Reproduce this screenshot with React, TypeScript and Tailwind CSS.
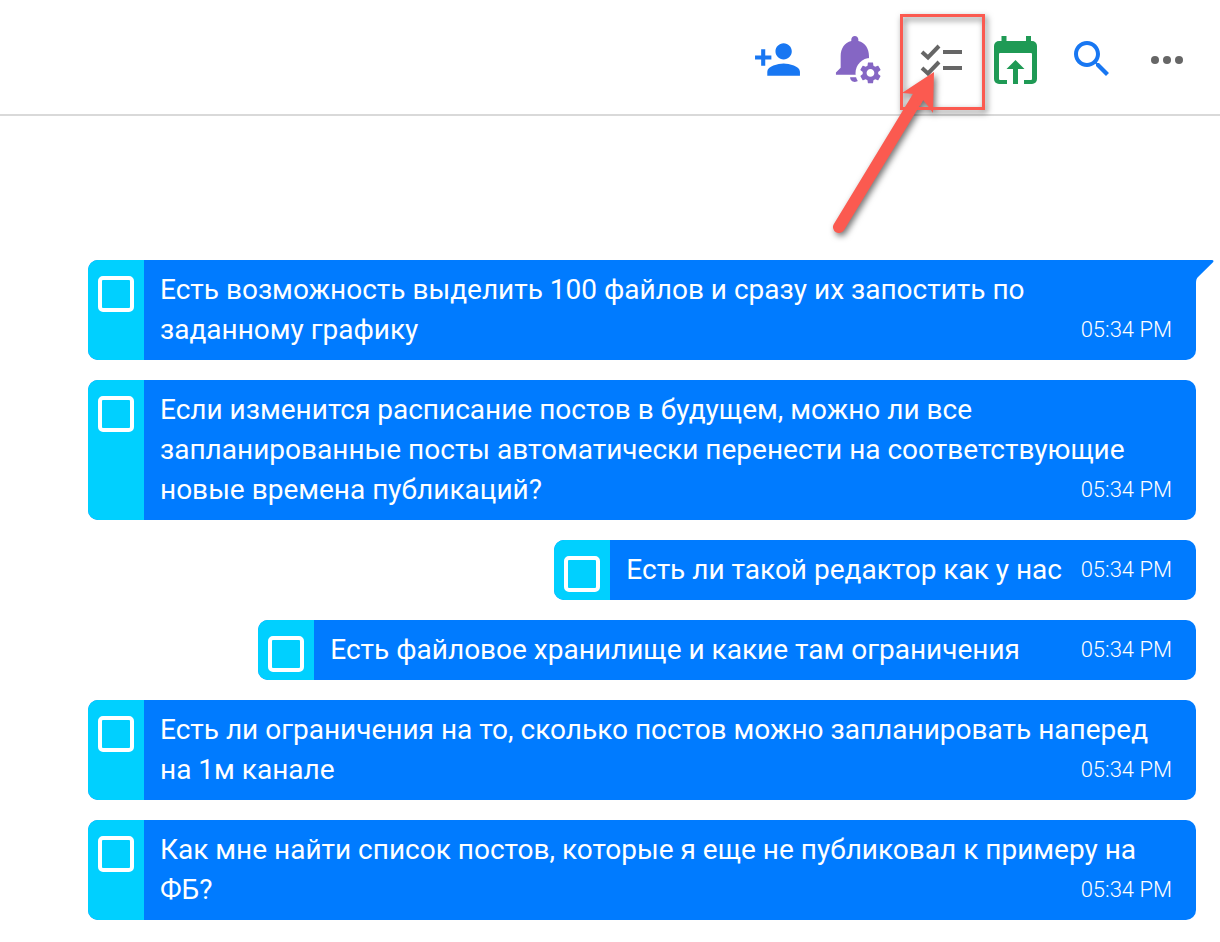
const MESSAGES = [
  { id: 1, text: 'Есть возможность выделить 100 файлов и сразу их запостить по заданному графику', tail: true, spacer: 'w-[100px]' },
  {
    id: 2,
    text: 'Если изменится расписание постов в будущем, можно ли все запланированные посты автоматически перенести на соответствующие новые времена публикаций?',
    spacer: 'w-[100px]',
  },
  { id: 3, text: 'Есть ли такой редактор как у нас', spacer: 'w-[99px]' },
  { id: 4, text: 'Есть файловое хранилище и какие там ограничения', spacer: 'w-[141px]' },
  { id: 5, text: 'Есть ли ограничения на то, сколько постов можно запланировать наперед на 1м канале', spacer: 'w-[100px]' },
  { id: 6, text: 'Как мне найти список постов, которые я еще не публиковал к примеру на ФБ?', spacer: 'w-[100px]' },
];

// --- Header icons ---
const AddPersonIcon = () => (
  <svg width="49" height="49" viewBox="0 0 24 24" fill="#1877f2" className="shrink-0">
    <path d="M15 12c2.21 0 4-1.79 4-4s-1.79-4-4-4-4 1.79-4 4 1.79 4 4 4zm-9-2V7H4v3H1v2h3v3h2v-3h3v-2H6zm9 4c-2.67 0-8 1.34-8 4v2h16v-2c0-2.66-5.33-4-8-4z" />
  </svg>
);

const BellGearIcon = () => (
  <svg width="57" height="57" viewBox="0 0 57 57" className="shrink-0">
    <g transform="translate(0.5 0) scale(2.36)" fill="#8566c4">
      <path d="M12 22c1.1 0 2-.9 2-2h-4c0 1.1.89 2 2 2zm6-6v-5c0-3.07-1.64-5.64-4.5-6.32V4c0-.83-.67-1.5-1.5-1.5s-1.5.67-1.5 1.5v.68C7.63 5.36 6 7.92 6 11v5l-2 2v1h16v-1l-2-2z" />
    </g>
    <circle cx="44.5" cy="43" r="15" fill="#fff" />
    <g transform="translate(31.5 30) scale(1.08)" fill="#8566c4">
      <path d="M19.14 12.94c.04-.3.06-.61.06-.94 0-.32-.02-.64-.07-.94l2.03-1.58c.18-.14.23-.41.12-.61l-1.92-3.32c-.12-.22-.37-.29-.59-.22l-2.39.96c-.5-.38-1.03-.7-1.62-.94l-.36-2.54c-.04-.24-.24-.41-.48-.41h-3.84c-.24 0-.43.17-.47.41l-.36 2.54c-.59.24-1.13.57-1.62.94l-2.39-.96c-.22-.08-.47 0-.59.22L2.74 8.87c-.12.21-.08.47.12.61l2.03 1.58c-.05.3-.09.63-.09.94s.02.64.07.94l-2.03 1.58c-.18.14-.23.41-.12.61l1.92 3.32c.12.22.37.29.59.22l2.39-.96c.5.38 1.03.7 1.62.94l.36 2.54c.05.24.24.41.48.41h3.84c.24 0 .44-.17.47-.41l.36-2.54c.59-.24 1.13-.56 1.62-.94l2.39.96c.22.08.47 0 .59-.22l1.92-3.32c.12-.22.07-.47-.12-.61l-2.01-1.58zM12 15.6c-1.98 0-3.6-1.62-3.6-3.6s1.62-3.6 3.6-3.6 3.6 1.62 3.6 3.6-1.62 3.6-3.6 3.6z" />
    </g>
  </svg>
);

const ChecklistIcon = () => (
  <svg width="44" height="34" viewBox="0 0 44 34" fill="none" stroke="#666" strokeWidth="4" className="shrink-0">
    <path d="M2 10l6 5.5L19 4" />
    <path d="M2 26l6 5.5L19 20" />
    <path d="M23 10h19" />
    <path d="M23 26h19" />
  </svg>
);

const CalendarUploadIcon = () => (
  <svg width="43" height="48" viewBox="0 0 43 48" className="shrink-0">
    <rect x="7.5" y="0" width="5" height="8" fill="#1f9a55" />
    <rect x="32" y="0" width="5" height="8" fill="#1f9a55" />
    <rect x="0" y="5" width="43" height="43" rx="5" fill="#1f9a55" />
    <rect x="5" y="17" width="33" height="27" rx="1" fill="#fff" />
    <rect x="13" y="43" width="17" height="5" fill="#fff" />
    <path d="M12.5 33L21.5 24l9 9h-6.5v15h-5V33z" fill="#1f9a55" />
  </svg>
);

const SearchIcon = () => (
  <svg width="48" height="48" viewBox="0 0 24 24" fill="#1877f2" className="shrink-0">
    <path d="M15.5 14h-.79l-.28-.27C15.41 12.59 16 11.11 16 9.5 16 5.91 13.09 3 9.5 3S3 5.91 3 9.5 5.91 16 9.5 16c1.61 0 3.09-.59 4.23-1.57l.27.28v.79l5 4.99L20.49 19l-4.99-5zm-6 0C7.01 14 5 11.99 5 9.5S7.01 5 9.5 5 14 7.01 14 9.5 11.99 14 9.5 14z" />
  </svg>
);

const MoreIcon = () => (
  <svg width="34" height="10" viewBox="0 0 34 10" fill="#666" className="shrink-0">
    <circle cx="5" cy="5" r="4" />
    <circle cx="17" cy="5" r="4" />
    <circle cx="29" cy="5" r="4" />
  </svg>
);

// --- Annotation drawn over the screenshot ---
const Annotation = () => (
  <svg width="1220" height="260" viewBox="0 0 1220 260" fill="none" className="absolute left-0 top-0 pointer-events-none">
    <g style={{ filter: 'drop-shadow(2px 3px 3px rgba(0,0,0,0.55))' }}>
      <rect x="901.5" y="15.5" width="82" height="93" stroke="#fb5a50" strokeWidth="3" />
      <path d="M839 227L918 97" stroke="#fb5a50" strokeWidth="12" strokeLinecap="round" />
      <path d="M934 72L902 93L914 94L920 106L923 100L928 106L933 113z" fill="#fb5a50" />
    </g>
  </svg>
);

const Message = ({ text, tail, spacer }: { text: string; tail?: boolean; spacer: string }) => (
  <div className={`relative flex min-w-0 max-w-[1108px] rounded-[10px] bg-[#007bff] ${tail ? 'rounded-tr-none' : ''}`}>
    <div className="w-14 shrink-0 rounded-l-[10px] bg-[#00d0ff] px-[10px] pt-4">
      <div className="h-9 w-9 rounded-[5px] border-4 border-white" />
    </div>
    <div className="relative min-w-0 py-[10px] pl-4 pr-[35px] text-[28px] leading-10 text-white">
      {text}
      <span className={`inline-block ${spacer}`} />
      <span className="absolute bottom-[10px] right-6 text-[22px] font-light leading-10">05:34 PM</span>
    </div>
    {tail && (
      <svg width="18" height="23" viewBox="0 0 18 23" fill="#007bff" className="absolute left-full top-0">
        <path d="M0 0H16c1.5 0 2 1.2 1 2.3L2 17c-1.2 1.2-2 3-2 6z" />
      </svg>
    )}
  </div>
);

export default function App() {
  return (
    <div className="relative h-[942px] w-[1220px] overflow-hidden bg-white font-['Roboto',sans-serif]">
      <header className="flex h-[116px] items-start border-b-2 border-[#d9d9d9] pl-[753px]">
        <div className="mt-[35px]"><AddPersonIcon /></div>
        <div className="ml-6 mt-[30px]"><BellGearIcon /></div>
        <div className="ml-[37px] mt-[42px]"><ChecklistIcon /></div>
        <div className="ml-[30px] mt-9"><CalendarUploadIcon /></div>
        <div className="ml-[31px] mt-[35px]"><SearchIcon /></div>
        <div className="ml-[34px] mt-[55px]"><MoreIcon /></div>
      </header>
      <main className="flex flex-col items-end gap-5 pr-6 pt-[144px]">
        {MESSAGES.map((message) => (
          <Message key={message.id} text={message.text} tail={message.tail} spacer={message.spacer} />
        ))}
      </main>
      <Annotation />
    </div>
  );
}
